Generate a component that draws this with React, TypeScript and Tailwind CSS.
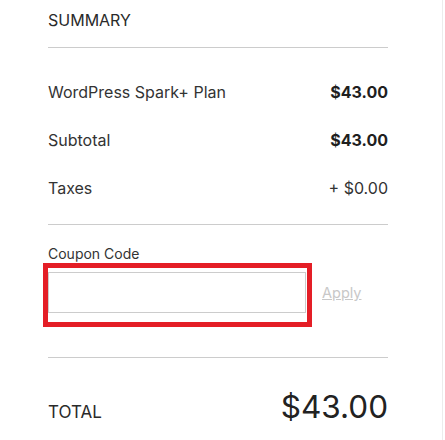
import React from "react";

export default function App() {
  return (
    <div className="w-[443px] h-[440px] bg-white border-r border-[#ececec] text-[#333333]" style={{ fontFamily: "Inter, 'Liberation Sans', sans-serif" }}>
      <div className="pl-12 w-[388px]">
        <div className="h-[47px] pt-2">
          <div className="text-[16px] leading-6 text-[#2a2a2a]">SUMMARY</div>
        </div>
        <div className="h-px bg-[#cccccc]" />
        <div className="flex flex-col gap-6 pt-8 pb-6 text-[16px]">
          <div className="flex h-6 items-center justify-between">
            <span>WordPress Spark+ Plan</span>
            <span className="font-bold text-[#1f1f1f]">$43.00</span>
          </div>
          <div className="flex h-6 items-center justify-between">
            <span>Subtotal</span>
            <span className="font-bold text-[#1f1f1f]">$43.00</span>
          </div>
          <div className="flex h-6 items-center justify-between">
            <span>Taxes</span>
            <span>+ $0.00</span>
          </div>
        </div>
        <div className="h-px bg-[#cccccc]" />
        <div className="pt-5 pb-[30px]">
          <div className="text-[14px] leading-[18px]">Coupon Code</div>
          <div className="flex items-center">
            <div className="-ml-[5px] w-[269px] border-[5px] border-[#e41e26] pt-1 pb-[9px] pr-px">
              <input className="block w-full h-[41px] border border-[#cccccc] bg-white outline-none px-2" />
            </div>
            <a className="ml-[10px] mb-1 text-[14.5px] text-[#c8c8c8] underline">Apply</a>
          </div>
        </div>
        <div className="h-px bg-[#cccccc]" />
        <div className="flex items-baseline justify-between pt-[33px]">
          <span className="text-[17px] text-[#2a2a2a]">TOTAL</span>
          <span className="text-[31.5px] leading-8 text-[#222222]">$43.00</span>
        </div>
      </div>
    </div>
  );
}
